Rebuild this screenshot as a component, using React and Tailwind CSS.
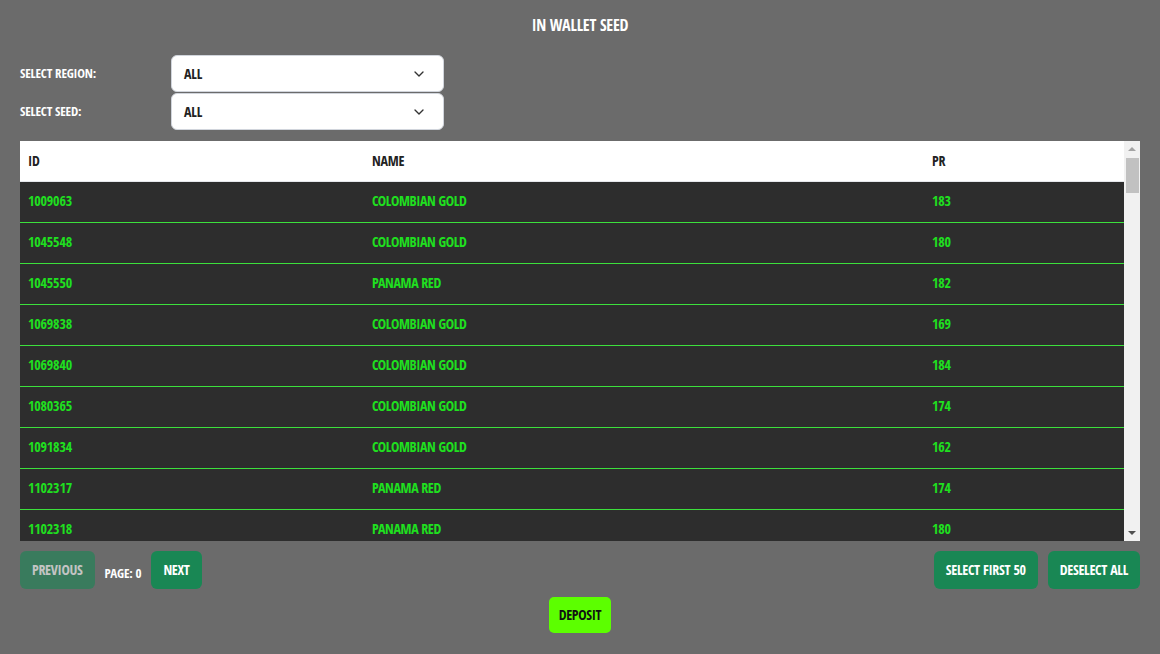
import { ChevronDown } from "lucide-react";

const rows = [
    ["1009063", "Colombian Gold", "183"],
    ["1045548", "Colombian Gold", "180"],
    ["1045550", "Panama Red", "182"],
    ["1069838", "Colombian Gold", "169"],
    ["1069840", "Colombian Gold", "184"],
    ["1080365", "Colombian Gold", "174"],
    ["1091834", "Colombian Gold", "162"],
    ["1102317", "Panama Red", "174"],
    ["1102318", "Panama Red", "180"],
];

function SelectBox({ value }) {
    return (
        <div className="flex h-[37px] w-[273px] items-center justify-between rounded-md border border-gray-300 bg-white pl-3 pr-4">
            <span className="text-[14px] font-bold text-[#222]">{value}</span>
            <ChevronDown className="h-4 w-4 text-[#333]" strokeWidth={2} />
        </div>
    );
}

function Btn({ children, className = "" }) {
    return (
        <button
            className={
                "h-[38px] rounded-md bg-[#198754] px-[12px] pb-[2px] text-[14px] font-bold uppercase tracking-[-0.3px] text-white " +
                className
            }
        >
            {children}
        </button>
    );
}

export default function App() {
    return (
        <div className="flex min-h-[654px] flex-col bg-[#6b6b6b] px-5 font-[family-name:'Open_Sans_Condensed','Roboto_Condensed',sans-serif] uppercase tracking-[-0.2px]">
            {/* title */}
            <h1 className="pt-[15px] pb-[20px] text-center text-[16px] font-bold leading-5 text-white">
                In Wallet Seed
            </h1>

            {/* filters */}
            <div className="flex flex-col gap-[1px]">
                <div className="flex items-center">
                    <label className="w-[151px] text-[13px] font-bold text-white">Select Region:</label>
                    <SelectBox value="All" />
                </div>
                <div className="flex items-center">
                    <label className="w-[151px] text-[13px] font-bold text-white">Select Seed:</label>
                    <SelectBox value="All" />
                </div>
            </div>

            {/* table */}
            <div className="mt-[11px] flex h-[400px] bg-white">
                <div className="flex-1 overflow-hidden">
                    <div className="flex h-[41px] items-center border-b border-gray-200 bg-white pb-[2px] text-[14px] font-bold text-[#222]">
                        <div className="w-[344px] pl-2">ID</div>
                        <div className="w-[560px] pl-2">Name</div>
                        <div className="flex-1 pl-2">PR</div>
                    </div>
                    {rows.map((r) => (
                        <div
                            key={r[0]}
                            className="flex h-[41px] items-center border-b border-[#3ce03c] bg-[#2d2d2d] pb-[3px] text-[14px] font-bold text-[#1fe01f]"
                        >
                            <div className="w-[344px] pl-2">{r[0]}</div>
                            <div className="w-[560px] pl-2 tracking-[-0.4px]">{r[1]}</div>
                            <div className="flex-1 pl-2">{r[2]}</div>
                        </div>
                    ))}
                </div>
                {/* scrollbar */}
                <div className="flex w-[16px] flex-col items-center bg-[#f1f1f1]">
                    <div className="flex h-[16px] items-center justify-center">
                        <div className="h-0 w-0 border-x-[4px] border-b-[4px] border-x-transparent border-b-[#a3a3a3]" />
                    </div>
                    <div className="mt-[1px] h-[35px] w-[13px] bg-[#c1c1c1]" />
                    <div className="flex-1" />
                    <div className="flex h-[16px] items-center justify-center">
                        <div className="h-0 w-0 border-x-[4px] border-t-[4px] border-x-transparent border-t-[#505050]" />
                    </div>
                </div>
            </div>

            {/* pagination */}
            <div className="mt-[10px] flex items-center justify-between">
                <div className="flex items-center">
                    <Btn className="text-[#d8d8d8] opacity-60">Previous</Btn>
                    <span className="ml-[10px] mt-[8px] text-[13px] font-bold text-white">Page: 0</span>
                    <Btn className="ml-[10px]">Next</Btn>
                </div>
                <div className="flex items-center gap-[10px]">
                    <Btn>Select First 50</Btn>
                    <Btn>Deselect All</Btn>
                </div>
            </div>

            {/* deposit */}
            <div className="mt-[8px] flex justify-center">
                <button className="h-[36px] rounded-[5px] bg-[#5cff00] px-[10px] pb-[2px] text-[14px] font-bold uppercase tracking-[-0.3px] text-[#111]">
                    Deposit
                </button>
            </div>
        </div>
    );
}
